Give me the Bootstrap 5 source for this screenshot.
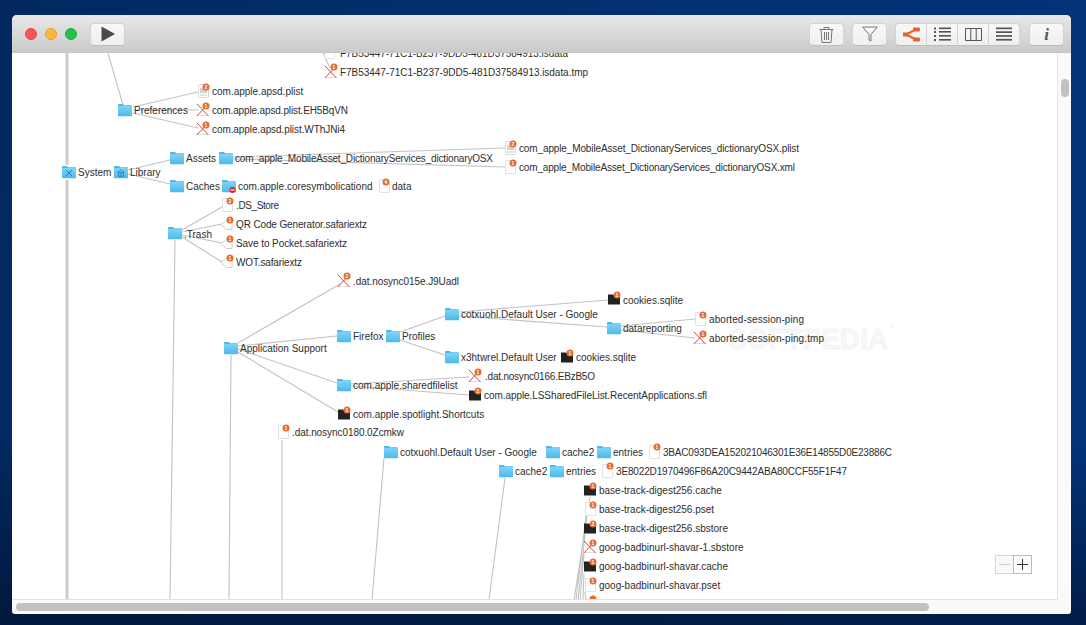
<!DOCTYPE html>
<html lang="en">
<head>
<meta charset="utf-8">
<title>Disk tree</title>
<link href="https://cdn.jsdelivr.net/npm/bootstrap@5.3.0/dist/css/bootstrap.min.css" rel="stylesheet">
<style>
html,body{height:100%}
body{margin:0;overflow:hidden;padding:15px 15px 11px 12px}
.bg-fade{background:linear-gradient(180deg,rgba(0,0,0,0) 70%,rgba(0,10,30,.55) 100%),linear-gradient(100deg,#02285f 0%,#02306f 45%,#02347a 100%)}
.win{height:599px;width:1059px;background:#fafafa;border-radius:5px 5px 3px 3px;overflow:hidden}
.tbar{height:38px;flex:none;padding:8px 7px 7px 13px;background:linear-gradient(180deg,#e9e8e9 0%,#cbcacb 100%);border-bottom:1px solid #c6c6c6}
.light{width:12px;height:12px;border-radius:50%;margin-right:8px}
.l-r{background:#f9555a;border:1px solid #e2454b}
.l-y{background:#fdb63c;border:1px solid #e3a030}
.l-g{background:#1fc24a;border:1px solid #1aa93f}
.tbtn{width:35px;height:23px;padding:0;display:flex;align-items:center;justify-content:center;background:linear-gradient(180deg,#f8f8f8,#efefef);border:1px solid #d3d3d3;border-bottom-color:#bdbdbd;border-radius:4px;--bs-btn-hover-bg:#f4f4f4;--bs-btn-hover-border-color:#d3d3d3}
.seg{width:32px}
.play-gap{margin-left:5px}
.sep8{margin-right:8px}
.sep9{margin-right:9px}
.info-i{font:italic 700 17px "Liberation Serif",serif;color:#555;line-height:1}
.mid{flex:1 1 auto;min-height:0}
.cv{position:relative;width:1045px;height:546px;flex:none;background:#fff;border-right:1px solid #e6e6e6;border-bottom:1px solid #e2e2e2;box-sizing:content-box;overflow:hidden}
.cv svg{display:block}
.vtrack{flex:1 1 auto;padding:26px 3px 0 3px}
.vthumb{width:8px;height:18px;border-radius:4px;background:#c2c2c2}
.htrack{height:14px;flex:none;padding:3px 142px 3px 4px}
.hthumb{height:8px;border-radius:4px;background:#c1c1c1}
.zoomer{position:absolute;right:25px;bottom:25px}
.zbtn{width:19px;height:19px;padding:0;display:flex;align-items:center;justify-content:center;background:#f9f9f9;border:1px solid #d8d8d8;border-radius:0}
.zbtn.on{border-color:#bcbcbc;background:#fdfdfd}
text.n{font:10px "Liberation Sans",Arial,sans-serif;fill:#2e2e2e}
text.d{font:700 5px "Liberation Sans",Arial,sans-serif;fill:#fff;text-anchor:middle}
text.wm{font:700 29px "Liberation Sans",Arial,sans-serif;fill:#f7f7f7;stroke:#f0f0f0;stroke-width:.5}
text.wr{font:7px "Liberation Sans",Arial,sans-serif;fill:#eee}
circle.o{fill:#e46c30}
.ln{stroke:#c2c2c2;stroke-width:1.1;fill:none}
.ln2{stroke:#cbcbcb;stroke-width:3;fill:none}
</style>
</head>
<body class="bg-fade">
<div class="win d-flex flex-column">
  <div class="tbar d-flex align-items-center">
    <span class="light l-r"></span><span class="light l-y"></span><span class="light l-g"></span>
    <button type="button" class="btn tbtn play-gap" aria-label="Play"><svg width="16" height="16" viewBox="0 0 16 16"><path d="M1.5 .5 15 8 1.5 15.5z" fill="#4a4a4a"/></svg></button>
    <div class="ms-auto d-flex">
      <button type="button" class="btn tbtn sep8" aria-label="Trash"><svg width="15" height="17" viewBox="0 0 15 17" fill="none" stroke="#777"><path d="M.5 3.5h14M5 3.5V1.5h5v2M2 3.5l1 13h9l1-13M5.5 6v8M7.5 6v8M9.5 6v8"/></svg></button>
      <button type="button" class="btn tbtn sep8" aria-label="Filter"><svg width="16" height="16" viewBox="0 0 16 16" fill="none" stroke="#777"><path d="M.7 1h14.6L9 8.5V15L7 14V8.5z"/></svg></button>
      <div class="btn-group sep9" role="group">
        <button type="button" class="btn tbtn seg" aria-label="Graph"><svg width="17" height="15" viewBox="0 0 17 15"><path d="M3 7.5 14 2M3 7.5 14 13" stroke="#e1662c" stroke-width="2"/><rect y="5.5" width="6" height="4" fill="#e1662c"/><rect x="10" y=".5" width="7" height="4" rx="1" fill="#e1662c"/><rect x="10" y="10.5" width="7" height="4" rx="1" fill="#e1662c"/></svg></button>
        <button type="button" class="btn tbtn seg" aria-label="Outline"><svg width="17" height="14" viewBox="0 0 17 14" fill="#555"><rect y=".5" width="2" height="2"/><rect x="5" y=".5" width="12" height="1.6"/><rect y="4" width="2" height="2"/><rect x="5" y="4" width="12" height="1.6"/><rect y="8" width="2" height="2"/><rect x="5" y="8" width="12" height="1.6"/><rect y="12" width="2" height="2"/><rect x="5" y="12" width="12" height="1.6"/></svg></button>
        <button type="button" class="btn tbtn seg" aria-label="Columns"><svg width="17" height="13" viewBox="0 0 17 13" fill="none" stroke="#555"><path d="M.5 .5h16v12H.5zM5.8 .5v12M11.2 .5v12"/></svg></button>
        <button type="button" class="btn tbtn seg" aria-label="List"><svg width="16" height="14" viewBox="0 0 16 14" fill="#555"><rect width="16" height="1.7" y=".5"/><rect width="16" height="1.7" y="4.3"/><rect width="16" height="1.7" y="8.1"/><rect width="16" height="1.7" y="11.9"/></svg></button>
      </div>
      <button type="button" class="btn tbtn" aria-label="Info"><span class="info-i">i</span></button>
    </div>
  </div>
  <div class="mid d-flex">
    <div class="cv">
      <svg width="1045" height="546" viewBox="12 53 1045 546">
        <defs>
          <linearGradient id="fg" x1="0" y1="0" x2="0" y2="1"><stop offset="0" stop-color="#7ed3f6"/><stop offset="1" stop-color="#4cb9ec"/></linearGradient>
          <symbol id="folder" width="14" height="14" viewBox="0 0 14 14"><path d="M0 3V1.8Q0 1 .8 1H5l1 1.3h7.2q.8 0 .8.8V3z" fill="#4fb8e8"/><path d="M0 3h14v9.6q0 .6-.6.6H.6q-.6 0-.6-.6z" fill="url(#fg)"/></symbol>
          <symbol id="sysf" width="14" height="14" viewBox="0 0 14 14"><use href="#folder"/><path d="M4 5l6 6M10 5l-6 6" stroke="#1d7fc0" stroke-width="1"/></symbol>
          <symbol id="libf" width="14" height="14" viewBox="0 0 14 14"><use href="#folder"/><path d="M4 7l3-2 3 2v.6H4zM4.5 8v3M7 8v3M9.5 8v3M4 11.3h6" stroke="#1d7fc0" stroke-width=".8" fill="none"/></symbol>
          <symbol id="blockf" width="16" height="16" viewBox="0 0 16 16"><use href="#folder"/><circle cx="10.5" cy="11" r="3" fill="#d8232a"/><rect x="8.7" y="10.4" width="3.6" height="1.2" fill="#fff"/></symbol>
          <symbol id="file" width="14" height="14" viewBox="0 0 14 14"><path d="M1.5 .5h7l3 3v10h-10z" fill="#fff" stroke="#e2e2e2"/></symbol>
          <symbol id="plist" width="14" height="14" viewBox="0 0 14 14"><path d="M1.5 .5h7l3 3v10h-10z" fill="#fff" stroke="#dcdcdc"/><rect x="3" y="4" width="7" height="5" fill="#d2d2d2"/><rect x="3" y="10" width="7" height="2" fill="#e4e4e4"/></symbol>
          <symbol id="cross" width="14" height="14" viewBox="0 0 14 14"><path d="M1.5 12.5h10" stroke="#ddd"/><path d="M.8 .8 12.5 13M12.5 .8.8 13" stroke="#d8404a" stroke-width="1"/></symbol>
          <symbol id="blk" width="14" height="14" viewBox="0 0 14 14"><path d="M1 2.5h5l1 1h6v9H1z" fill="#222"/></symbol>
          <symbol id="ext" width="14" height="14" viewBox="0 0 14 14"><path d="M.8 6.5 6.5 2.5H12V11.5H6.5z" fill="#fff" stroke="#cfcfcf" stroke-linejoin="round"/></symbol>
        </defs>

        <text class="wm" x="728" y="349" textLength="160" lengthAdjust="spacingAndGlyphs">SOFTPEDIA</text>
        <text class="wr" x="890" y="329">®</text>

        <path class="ln2" d="M67 53V165M67 180V600"/>
        <path class="ln" d="M108 53 123 105M133 107 198 92M133 110H198M133 113 198 128M323 53l7 15M128 170 170 160M128 174 170 184M233 157 505 148M233 159 505 167M182 230 222 207M182 232 222 224M182 235 222 243M182 237 222 262"/>
        <path class="ln" d="M238 343 340 284M238 346 337 336M238 349 337 383M238 352 338 412M400 332 445 316M400 340 445 355M459 312 608 300M459 316 607 327M621 326 695 319M621 330 695 338M351 384 469 377M351 386 469 395"/>
        <path class="ln" d="M175 240 170 600M231 355 229 600M282 440V600M384 458 372 600M505 478 489 600"/>
        <path class="ln" d="M590 497 574 600M586 516 576 600M585 535 578 600M584 554 580 600M584 573 583 600M585 592 586 600"/>

        <use href="#file" x="323" y="45"/><text class="n" x="340" y="57" textLength="228">F7B53447-71C1-B237-9DD5-481D37584913.isdata</text>
        <use href="#cross" x="324" y="65"/><circle class="o" cx="334" cy="67" r="3.5"/><text class="d" x="334" y="69">1</text><text class="n" x="340" y="76" textLength="248">F7B53447-71C1-B237-9DD5-481D37584913.isdata.tmp</text>

        <use href="#plist" x="197" y="84"/><circle class="o" cx="206" cy="87" r="3.5"/><text class="d" x="206" y="89">2</text><text class="n" x="212" y="95">com.apple.apsd.plist</text>
        <use href="#folder" x="118" y="103"/><text class="n" x="134" y="114">Preferences</text>
        <use href="#cross" x="196" y="103"/><circle class="o" cx="206" cy="106" r="3.5"/><text class="d" x="206" y="108">1</text><text class="n" x="212" y="114" textLength="136">com.apple.apsd.plist.EH5BqVN</text>
        <use href="#cross" x="196" y="122"/><circle class="o" cx="206" cy="125" r="3.5"/><text class="d" x="206" y="127">1</text><text class="n" x="212" y="133" textLength="133">com.apple.apsd.plist.WThJNi4</text>

        <use href="#folder" x="170" y="151"/><text class="n" x="186" y="162">Assets</text>
        <use href="#folder" x="219" y="151"/><text class="n" x="235" y="162" textLength="258">com_apple_MobileAsset_DictionaryServices_dictionaryOSX</text>
        <use href="#plist" x="504" y="141"/><circle class="o" cx="513" cy="144" r="3.5"/><text class="d" x="513" y="146">2</text><text class="n" x="519" y="152" textLength="280">com_apple_MobileAsset_DictionaryServices_dictionaryOSX.plist</text>
        <use href="#file" x="504" y="160"/><circle class="o" cx="513" cy="163" r="3.5"/><text class="d" x="513" y="165">1</text><text class="n" x="519" y="171" textLength="276">com_apple_MobileAsset_DictionaryServices_dictionaryOSX.xml</text>

        <use href="#sysf" x="62" y="165"/><text class="n" x="78" y="176">System</text>
        <use href="#libf" x="114" y="165"/><text class="n" x="130" y="176">Library</text>
        <use href="#folder" x="170" y="179"/><text class="n" x="186" y="190">Caches</text>
        <use href="#blockf" x="222" y="179"/><text class="n" x="238" y="190">com.apple.coresymbolicationd</text>
        <use href="#file" x="378" y="179"/><circle class="o" cx="386" cy="182" r="3.5"/><text class="d" x="386" y="184">4</text><text class="n" x="392" y="190">data</text>

        <use href="#file" x="221" y="198"/><circle class="o" cx="230" cy="201" r="3.5"/><text class="d" x="230" y="203">2</text><text class="n" x="236" y="209" textLength="43">.DS_Store</text>
        <use href="#folder" x="168" y="226"/><text class="n" x="184" y="238">.Trash</text>
        <use href="#ext" x="220" y="218"/><circle class="o" cx="230" cy="220" r="3.5"/><text class="d" x="230" y="222">1</text><text class="n" x="236" y="228" textLength="131">QR Code Generator.safariextz</text>
        <use href="#ext" x="220" y="237"/><circle class="o" cx="230" cy="239" r="3.5"/><text class="d" x="230" y="241">1</text><text class="n" x="236" y="247" textLength="111">Save to Pocket.safariextz</text>
        <use href="#ext" x="220" y="256"/><circle class="o" cx="230" cy="258" r="3.5"/><text class="d" x="230" y="260">1</text><text class="n" x="236" y="266" textLength="66">WOT.safariextz</text>

        <use href="#cross" x="337" y="274"/><circle class="o" cx="347" cy="276" r="3.5"/><text class="d" x="347" y="278">2</text><text class="n" x="353" y="285" textLength="106">.dat.nosync015e.J9Uadl</text>
        <use href="#folder" x="445" y="307"/><text class="n" x="461" y="318">cotxuohl.Default User - Google</text>
        <use href="#blk" x="607" y="292"/><circle class="o" cx="617" cy="295" r="3.5"/><text class="d" x="617" y="297">1</text><text class="n" x="623" y="304">cookies.sqlite</text>
        <use href="#folder" x="607" y="321"/><text class="n" x="623" y="332">datareporting</text>
        <use href="#file" x="694" y="312"/><circle class="o" cx="703" cy="315" r="3.5"/><text class="d" x="703" y="317">1</text><text class="n" x="709" y="323" textLength="95">aborted-session-ping</text>
        <use href="#cross" x="693" y="331"/><circle class="o" cx="703" cy="334" r="3.5"/><text class="d" x="703" y="336">1</text><text class="n" x="709" y="342" textLength="115">aborted-session-ping.tmp</text>
        <use href="#folder" x="337" y="329"/><text class="n" x="353" y="340">Firefox</text>
        <use href="#folder" x="386" y="329"/><text class="n" x="402" y="340">Profiles</text>
        <use href="#folder" x="224" y="341"/><text class="n" x="240" y="352">Application Support</text>
        <use href="#folder" x="445" y="350"/><text class="n" x="461" y="361">x3htwrel.Default User</text>
        <use href="#blk" x="560" y="350"/><circle class="o" cx="570" cy="353" r="3.5"/><text class="d" x="570" y="355">1</text><text class="n" x="576" y="361">cookies.sqlite</text>
        <use href="#cross" x="468" y="369"/><circle class="o" cx="478" cy="372" r="3.5"/><text class="d" x="478" y="374">1</text><text class="n" x="485" y="380" textLength="110">.dat.nosync0166.EBzB5O</text>
        <use href="#folder" x="337" y="378"/><text class="n" x="353" y="389">com.apple.sharedfilelist</text>
        <use href="#blk" x="468" y="388"/><circle class="o" cx="478" cy="391" r="3.5"/><text class="d" x="478" y="393">1</text><text class="n" x="484" y="399" textLength="223">com.apple.LSSharedFileList.RecentApplications.sfl</text>
        <use href="#blk" x="337" y="407"/><circle class="o" cx="347" cy="410" r="3.5"/><text class="d" x="347" y="412">1</text><text class="n" x="353" y="418">com.apple.spotlight.Shortcuts</text>
        <use href="#file" x="277" y="425"/><circle class="o" cx="286" cy="428" r="3.5"/><text class="d" x="286" y="430">1</text><text class="n" x="292" y="436" textLength="112">.dat.nosync0180.0Zcmkw</text>

        <use href="#folder" x="384" y="445"/><text class="n" x="400" y="456">cotxuohl.Default User - Google</text>
        <use href="#folder" x="546" y="445"/><text class="n" x="562" y="456">cache2</text>
        <use href="#folder" x="597" y="445"/><text class="n" x="613" y="456">entries</text>
        <use href="#file" x="648" y="445"/><circle class="o" cx="657" cy="447" r="3.5"/><text class="d" x="657" y="449">1</text><text class="n" x="663" y="456" textLength="229">3BAC093DEA152021046301E36E14855D0E23886C</text>
        <use href="#folder" x="499" y="464"/><text class="n" x="515" y="475">cache2</text>
        <use href="#folder" x="550" y="464"/><text class="n" x="566" y="475">entries</text>
        <use href="#file" x="601" y="464"/><circle class="o" cx="610" cy="466" r="3.5"/><text class="d" x="610" y="468">1</text><text class="n" x="616" y="475" textLength="231">3E8022D1970496F86A20C9442ABA80CCF55F1F47</text>

        <use href="#blk" x="583" y="483"/><circle class="o" cx="593" cy="486" r="3.5"/><text class="d" x="593" y="488">1</text><text class="n" x="599" y="494">base-track-digest256.cache</text>
        <use href="#file" x="584" y="502"/><circle class="o" cx="593" cy="505" r="3.5"/><text class="d" x="593" y="507">1</text><text class="n" x="599" y="513">base-track-digest256.pset</text>
        <use href="#blk" x="583" y="521"/><circle class="o" cx="593" cy="524" r="3.5"/><text class="d" x="593" y="526">2</text><text class="n" x="599" y="532">base-track-digest256.sbstore</text>
        <use href="#cross" x="583" y="540"/><circle class="o" cx="593" cy="543" r="3.5"/><text class="d" x="593" y="545">1</text><text class="n" x="599" y="551">goog-badbinurl-shavar-1.sbstore</text>
        <use href="#blk" x="583" y="559"/><circle class="o" cx="593" cy="562" r="3.5"/><text class="d" x="593" y="564">1</text><text class="n" x="599" y="570">goog-badbinurl-shavar.cache</text>
        <use href="#file" x="584" y="578"/><circle class="o" cx="593" cy="581" r="3.5"/><text class="d" x="593" y="583">1</text><text class="n" x="599" y="589">goog-badbinurl-shavar.pset</text>
        <use href="#blk" x="583" y="597"/><circle class="o" cx="593" cy="599" r="3.5"/>
      </svg>
      <div class="zoomer btn-group" role="group">
        <button type="button" class="btn zbtn" aria-label="Zoom out"><svg width="13" height="13" viewBox="0 0 13 13"><path d="M1 6.5h11" stroke="#cfcfcf" stroke-width="1"/></svg></button>
        <button type="button" class="btn zbtn on" aria-label="Zoom in"><svg width="13" height="13" viewBox="0 0 13 13"><path d="M1 6.5h11M6.5 1v11" stroke="#333" stroke-width="1"/></svg></button>
      </div>
    </div>
    <div class="vtrack"><div class="vthumb"></div></div>
  </div>
  <div class="htrack"><div class="hthumb"></div></div>
</div>
<script src="https://cdn.jsdelivr.net/npm/bootstrap@5.3.0/dist/js/bootstrap.bundle.min.js"></script>
</body>
</html>
